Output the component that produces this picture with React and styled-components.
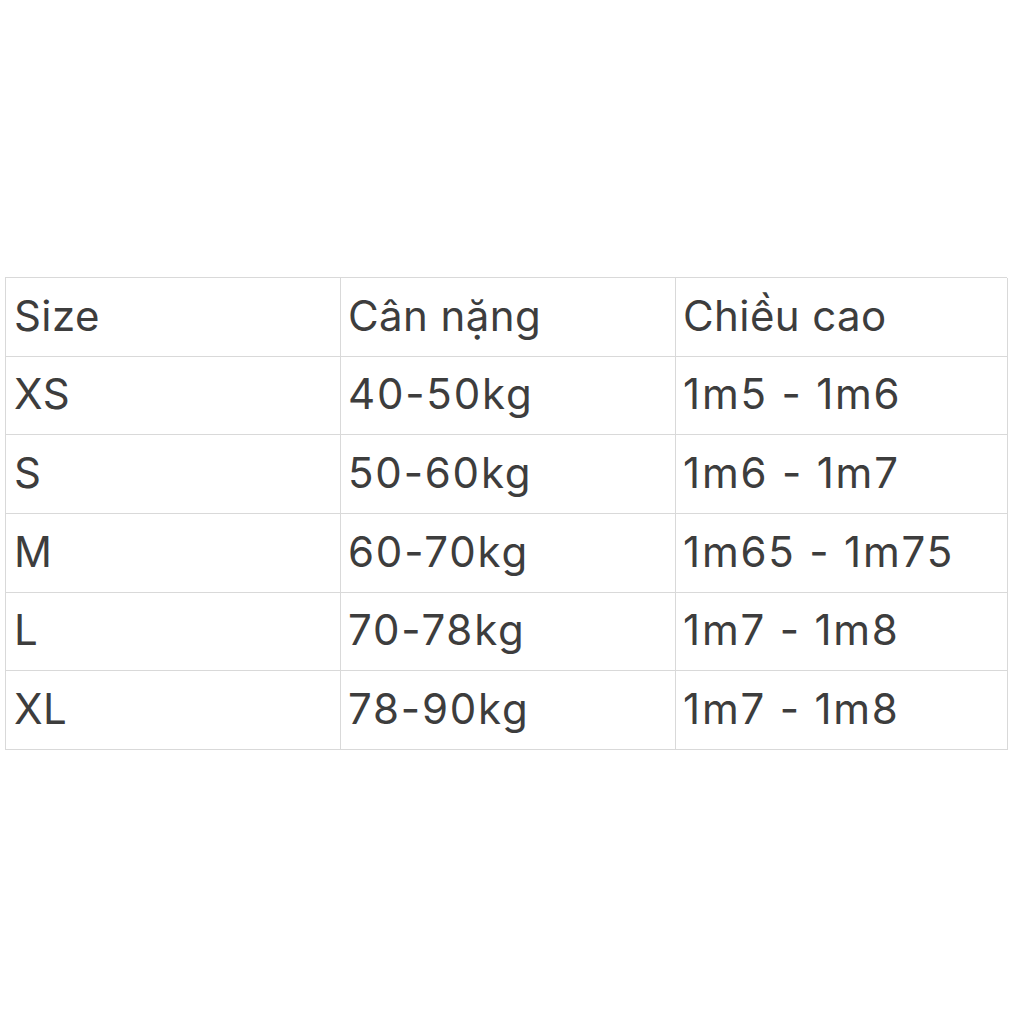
import React from "react";
import styled, { createGlobalStyle } from "styled-components";

const Global = createGlobalStyle`
  html, body { margin: 0; padding: 0; background: #ffffff; }
  body { font-family: Inter, "Liberation Sans", Arial, sans-serif; }
`;

const Page = styled.div`
  width: 1024px;
  height: 1024px;
  padding: 277px 0 0 5px;
  box-sizing: border-box;
`;

const Table = styled.div`
  display: grid;
  grid-template-columns: 335px 335px 332px;
  grid-auto-rows: 78.67px;
  width: 1002px;
  border-top: 1px solid #d9d9d9;
  border-left: 1px solid #d9d9d9;
  box-sizing: border-box;
`;

const Cell = styled.div`
  display: flex;
  align-items: center;
  padding: 0 0 3px ${(p) => (p.$col === 0 ? 8 : 7)}px;
  border-right: 1px solid #d9d9d9;
  border-bottom: 1px solid #d9d9d9;
  box-sizing: border-box;
  font-size: 42px;
  letter-spacing: ${(p) => (p.$numeric ? "1.8px" : "0.4px")};
  color: #3d3d3d;
  white-space: nowrap;
`;

const rows = [
  ["Size", "Cân nặng", "Chiều cao"],
  ["XS", "40-50kg", "1m5 - 1m6"],
  ["S", "50-60kg", "1m6 - 1m7"],
  ["M", "60-70kg", "1m65 - 1m75"],
  ["L", "70-78kg", "1m7 - 1m8"],
  ["XL", "78-90kg", "1m7 - 1m8"],
];

export default function App() {
  return (
    <>
      <Global />
      <Page>
        <Table>
          {rows.map((r, i) =>
            r.map((c, j) => (
              <Cell key={`${i}-${j}`} $col={j} $numeric={i > 0 && j > 0}>
                {c}
              </Cell>
            ))
          )}
        </Table>
      </Page>
    </>
  );
}
